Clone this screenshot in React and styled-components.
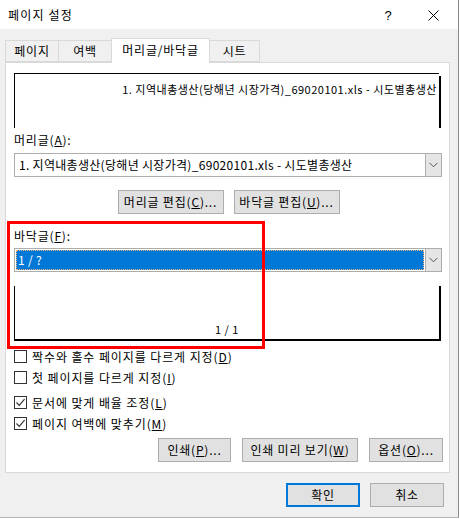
import styled, { createGlobalStyle } from 'styled-components'

const GlobalStyle = createGlobalStyle`
  html, body {
    margin: 0;
    padding: 0;
    background: #ffffff;
  }
  body {
    font-family: 'Noto Sans CJK KR', 'Noto Sans', sans-serif;
    font-size: 12px;
    letter-spacing: 0.8px;
    color: #000;
  }
`

const Window = styled.div`
  width: 458px;
  height: 517px;
  border-right: 1px solid #8a8a8a;
  border-bottom: 1px solid #b4b4b4;
  background: #f0f0f0;
  display: flex;
  flex-direction: column;
  overflow: hidden;
`

const TitleBar = styled.div`
  height: 29px;
  background: #ffffff;
  display: flex;
  align-items: center;
  padding-left: 8px;
  padding-top: 1px;
  box-sizing: border-box;
`

const Title = styled.div`
  flex: 1;
  font-size: 12px;
  line-height: 16px;
  letter-spacing: 1.2px;
`

const TitleButton = styled.div`
  width: 45px;
  height: 29px;
  display: flex;
  align-items: center;
  justify-content: center;
  font-size: 13px;
  font-family: 'Liberation Sans', sans-serif;
`

const Body = styled.div`
  padding: 9px 8px 0 5px;
  display: flex;
  flex-direction: column;
`

const TabRow = styled.div`
  height: 24px;
  display: flex;
  align-items: flex-end;
`

const Tab = styled.div`
  width: ${(p) => p.w}px;
  height: ${(p) => (p.selected ? 25 : 22)}px;
  margin-left: ${(p) => (p.first ? 0 : -1)}px;
  margin-bottom: ${(p) => (p.selected ? -1 : 0)}px;
  box-sizing: border-box;
  border: 1px solid #d9d9d9;
  border-bottom: ${(p) => (p.selected ? 'none' : '1px solid #d9d9d9')};
  background: ${(p) => (p.selected ? '#ffffff' : '#f0f0f0')};
  position: relative;
  z-index: ${(p) => (p.selected ? 2 : 1)};
  display: flex;
  align-items: center;
  justify-content: center;
  line-height: 16px;
  padding-bottom: ${(p) => (p.selected ? 3 : 1)}px;
`

const Panel = styled.div`
  width: 445px;
  height: 411px;
  box-sizing: border-box;
  border: 1px solid #d9d9d9;
  background: #ffffff;
  padding: 10px 6px 10px 8px;
  display: flex;
  flex-direction: column;
  position: relative;
`

const Preview = styled.div`
  width: 425px;
  height: 55px;
  box-sizing: border-box;
  position: relative;
  border-left: 1px solid #000;
  ${(p) =>
    p.top
      ? 'border-top: 1px solid #000; padding: 8px 2px 0 0;'
      : 'border-bottom: 2px solid #000; padding: 0 0 3px 0; width: 427px; border-right: 2px solid #000;'}
  display: flex;
  flex-direction: column;
  justify-content: ${(p) => (p.top ? 'flex-start' : 'flex-end')};
  align-items: ${(p) => (p.top ? 'flex-end' : 'center')};
  margin-top: ${(p) => p.mt || 0}px;
  font-size: 11px;
  line-height: 14px;
  letter-spacing: 0.5px;
  white-space: nowrap;
`

const PreviewShadow = styled.div`
  position: absolute;
  top: 2px;
  right: -2px;
  width: 2px;
  bottom: 0;
  background: #000;
`

const Label = styled.div`
  height: 16px;
  line-height: 16px;
  margin-top: ${(p) => p.mt}px;
`

const Combo = styled.div`
  width: 428px;
  height: 24px;
  box-sizing: border-box;
  border: 1px solid #adadad;
  background: #ffffff;
  display: flex;
  margin-top: ${(p) => p.mt}px;
`

const ComboValue = styled.div`
  flex: 1;
  display: flex;
  align-items: center;
  white-space: nowrap;
  overflow: hidden;
  padding-left: ${(p) => (p.selected ? 2 : 4)}px;
  margin: ${(p) => (p.selected ? '1px' : '0')};
  background: ${(p) => (p.selected ? '#0078d7' : 'transparent')};
  color: ${(p) => (p.selected ? '#ffffff' : '#000')};
  outline: ${(p) => (p.selected ? '1px dotted #f3b37a' : 'none')};
  outline-offset: -1px;
  line-height: 16px;
  font-size: 12px;
  letter-spacing: 0.3px;
`

const ComboArrow = styled.div`
  width: 16px;
  box-sizing: border-box;
  border-left: 1px solid #adadad;
  background: #e5e5e5;
  display: flex;
  align-items: center;
  justify-content: center;
`

const ButtonRow = styled.div`
  display: flex;
  justify-content: ${(p) => p.justify || 'center'};
  gap: ${(p) => p.gap || 10}px;
  margin-top: ${(p) => p.mt}px;
`

const Button = styled.div`
  width: ${(p) => p.w}px;
  height: 24px;
  box-sizing: border-box;
  border: ${(p) => (p.primary ? '2px solid #0078d7' : '1px solid #adadad')};
  background: #e1e1e1;
  display: flex;
  align-items: center;
  justify-content: center;
  line-height: 16px;
  white-space: nowrap;
`

const CheckGroup = styled.div`
  display: flex;
  flex-direction: column;
  margin-top: ${(p) => p.mt}px;
`

const CheckRow = styled.div`
  height: 21px;
  display: flex;
  align-items: center;
  gap: 5px;
  line-height: 16px;
  letter-spacing: 0.9px;
`

const CheckBox = styled.div`
  width: 13px;
  height: 13px;
  box-sizing: border-box;
  border: 1px solid #333333;
  background: #ffffff;
  display: flex;
  align-items: center;
  justify-content: center;
`

const Highlight = styled.div`
  position: absolute;
  left: 1px;
  top: 158px;
  width: 258px;
  height: 128px;
  box-sizing: border-box;
  border: 3px solid #ff0000;
  pointer-events: none;
`

const Footer = styled.div`
  display: flex;
  justify-content: flex-end;
  gap: 10px;
  margin-top: 10px;
  padding-right: 6px;
`

const Chevron = () => (
  <svg width="9" height="6" viewBox="0 0 9 6">
    <path d="M0.5 0.8 L4.5 4.8 L8.5 0.8" fill="none" stroke="#555" strokeWidth="1" />
  </svg>
)

const Check = () => (
  <svg width="11" height="11" viewBox="0 0 11 11">
    <path d="M1.5 5.5 L4.2 8.3 L9.6 2.2" fill="none" stroke="#333" strokeWidth="1.2" />
  </svg>
)

const CloseIcon = () => (
  <svg width="11" height="11" viewBox="0 0 11 11">
    <path d="M0.5 0.5 L10.5 10.5 M10.5 0.5 L0.5 10.5" stroke="#000" strokeWidth="1" />
  </svg>
)

const fileName = '1. 지역내총생산(당해년 시장가격)_69020101.xls - 시도별총생산'

const checks = [
  { text: '짝수와 홀수 페이지를 다르게 지정', key: 'D', on: false },
  { text: '첫 페이지를 다르게 지정', key: 'I', on: false },
]
const checks2 = [
  { text: '문서에 맞게 배율 조정', key: 'L', on: true },
  { text: '페이지 여백에 맞추기', key: 'M', on: true },
]

const CheckItem = ({ item }) => (
  <CheckRow>
    <CheckBox>{item.on && <Check />}</CheckBox>
    <span>
      {item.text}(<u>{item.key}</u>)
    </span>
  </CheckRow>
)

export default function App() {
  return (
    <>
      <GlobalStyle />
      <Window>
        <TitleBar>
          <Title>페이지 설정</Title>
          <TitleButton>?</TitleButton>
          <TitleButton>
            <CloseIcon />
          </TitleButton>
          <div style={{ width: 2 }} />
        </TitleBar>
        <Body>
          <TabRow>
            <Tab w={54} first>페이지</Tab>
            <Tab w={54}>여백</Tab>
            <Tab w={99} selected>머리글/바닥글</Tab>
            <Tab w={51}>시트</Tab>
          </TabRow>
          <Panel>
            <Preview top>
              {fileName}
              <PreviewShadow />
            </Preview>
            <Label mt={4}>
              머리글(<u>A</u>):
            </Label>
            <Combo mt={5}>
              <ComboValue>{fileName}</ComboValue>
              <ComboArrow>
                <Chevron />
              </ComboArrow>
            </Combo>
            <ButtonRow mt={13}>
              <Button w={106}>
                머리글 편집(<u>C</u>)...
              </Button>
              <Button w={106}>
                바닥글 편집(<u>U</u>)...
              </Button>
            </ButtonRow>
            <Label mt={14}>
              바닥글(<u>F</u>):
            </Label>
            <Combo mt={4}>
              <ComboValue selected>1 / ?</ComboValue>
              <ComboArrow>
                <Chevron />
              </ComboArrow>
            </Combo>
            <Preview mt={14}>1 / 1</Preview>
            <CheckGroup mt={5}>
              {checks.map((c) => (
                <CheckItem key={c.key} item={c} />
              ))}
            </CheckGroup>
            <CheckGroup mt={4}>
              {checks2.map((c) => (
                <CheckItem key={c.key} item={c} />
              ))}
            </CheckGroup>
            <ButtonRow mt={4} justify="flex-end" gap={11}>
              <Button w={73}>
                인쇄(<u>P</u>)...
              </Button>
              <Button w={116}>
                인쇄 미리 보기(<u>W</u>)
              </Button>
              <Button w={74}>
                옵션(<u>O</u>)...
              </Button>
            </ButtonRow>
            <Highlight />
          </Panel>
          <Footer>
            <Button w={74} primary>
              확인
            </Button>
            <Button w={74}>취소</Button>
          </Footer>
        </Body>
      </Window>
    </>
  )
}
